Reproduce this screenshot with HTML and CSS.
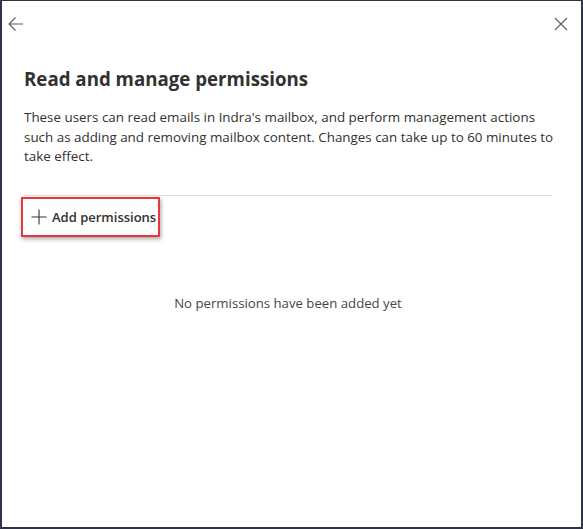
FILE: index.html
```html
<!doctype html>
<html lang="en">
<head>
<meta charset="utf-8">
<title>Read and manage permissions</title>
<link rel="stylesheet" href="styles.css">
</head>
<body>
	<div class="panel">

		<div class="topBar">
			<button class="iconBtn" title="Back">
				<svg width="16" height="16" viewBox="0 0 16 16"><path d="M15 8H1.5M7.5 1.5L1 8l6.5 6.5" fill="none" stroke="#605e5c" stroke-width="1.1"/></svg>
			</button>
			<button class="iconBtn" title="Close">
				<svg width="14" height="14" viewBox="0 0 14 14"><path d="M1 1l12 12M13 1L1 13" fill="none" stroke="#605e5c" stroke-width="1.1"/></svg>
			</button>
		</div>

		<div class="content">
			<h2 class="title">Read and manage permissions</h2>
			<p class="desc">These users can read emails in Indra's mailbox, and perform management actions<br>such as adding and removing mailbox content. Changes can take up to 60 minutes to<br>take effect.</p>

			<div class="toolbar">
				<button class="addBtn">
					<svg width="16" height="16" viewBox="0 0 16 16"><path d="M8 0.5v15M0.5 8h15" fill="none" stroke="#323130" stroke-width="1.1"/></svg>
					<span>Add permissions</span>
				</button>
			</div>

			<p class="empty">No permissions have been added yet</p>
		</div>

	</div>
</body>
</html>
```

FILE: styles.css
```css
	html, body { height: 100%; }
	body { margin: 0; font-family: "Open Sans", "Noto Sans", sans-serif; color: #323130; background: #fff; }

	.panel { box-sizing: border-box; height: 100%; border: solid #2d3446; border-width: 1px 2px 2px 2px; }

	.topBar { display: flex; justify-content: space-between; padding: 14px 11px 0 5px; }
	.iconBtn { background: none; border: none; padding: 0; width: 18px; height: 18px; display: flex; align-items: center; justify-content: center; cursor: pointer; }

	.content { padding: 0 29px 0 22px; }

	.title { font-size: 18.7px; font-weight: 700; margin: 34px 0 0 0; line-height: 24px; }
	.desc { font-size: 13.4px; line-height: 19.5px; margin: 17px -12px 0 0; }

	.toolbar { border-top: 1px solid #e1dfdd; margin-top: 28px; padding-top: 1px; }
	.addBtn { display: flex; align-items: center; gap: 5px; background: #fff; border: 2px solid #e8363c; box-shadow: 1px 2px 4px rgba(0,0,0,0.35); padding: 0 2px 0 8px; height: 40px; margin-left: -3px; font: 600 13px "Open Sans", "Noto Sans", sans-serif; color: #323130; cursor: pointer; }

	.empty { text-align: center; font-size: 13.2px; color: #484644; margin: 57px 0 0 0; }
```
